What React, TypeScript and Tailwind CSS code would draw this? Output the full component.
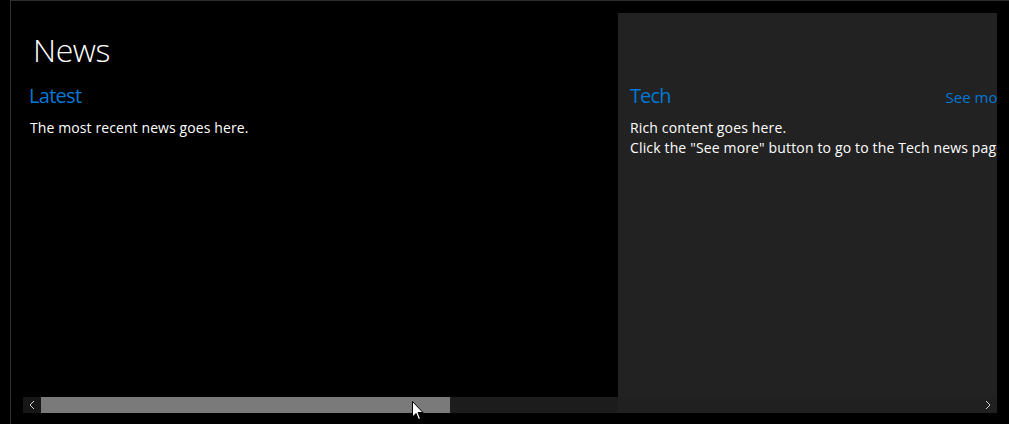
export default function App() {
  const font = { fontFamily: '"Open Sans", "Noto Sans", sans-serif' };
  return (
    <div className="w-[1009px] h-[424px] bg-black flex overflow-hidden" style={font}>
      <div className="w-[10px] shrink-0 bg-black" />
      <div className="flex-1 border-l border-t border-[#2e2e2e] pl-[12px] pt-[12px] relative">
        <div className="w-[974px] flex flex-col">
          <div className="h-[384px] flex overflow-hidden">
            {/* first hub section with page header */}
            <section className="w-[595px] shrink-0 pl-[6px]">
              <div className="h-[70px] pl-[4px] pt-[17px]">
                <h1 className="text-[32px] font-light text-white leading-[40px] tracking-[-0.4px]">News</h1>
              </div>
              <h2 className="text-[20px] text-[#0078d7] leading-[26px] tracking-[-0.7px]">Latest</h2>
              <p className="mt-[9px] pl-[1px] text-[14px] leading-[20px] text-white tracking-[0.1px]">The most recent news goes here.</p>
            </section>
            {/* tech section */}
            <section className="w-[379px] shrink-0 bg-[#222222] pl-[12px] overflow-hidden">
              <div className="h-[70px]" />
              <div className="flex items-baseline justify-between w-[400px]">
                <h2 className="text-[20px] text-[#0078d7] leading-[26px] tracking-[-0.9px]">Tech</h2>
                <span className="text-[15px] text-[#0078d7] pr-[18px]">See more</span>
              </div>
              <div className="mt-[9px] text-[14px] leading-[20px] text-white whitespace-nowrap tracking-[0.15px]">
                <p>Rich content goes here.</p>
                <p>Click the "See more" button to go to the Tech news page.</p>
              </div>
            </section>
          </div>
          {/* horizontal scrollbar */}
          <div className="h-[16px] flex">
            <div className="w-[18px] bg-[#171717] flex items-center justify-center">
              <svg width="6" height="10" viewBox="0 0 6 10">
                <path d="M5 1 L1 5 L5 9" fill="none" stroke="#d0d0d0" strokeWidth="1" />
              </svg>
            </div>
            <div className="w-[409px] bg-[#7a7a7a]" />
            <div className="w-[168px] bg-[#1c1c1c]" />
            <div className="flex-1 bg-[#202020] flex items-center justify-end pr-[6px]">
              <svg width="6" height="10" viewBox="0 0 6 10">
                <path d="M1 1 L5 5 L1 9" fill="none" stroke="#d0d0d0" strokeWidth="1" />
              </svg>
            </div>
          </div>
        </div>
        {/* mouse pointer */}
        <svg className="absolute left-[401px] top-[400px]" width="12" height="20" viewBox="0 0 12 20">
          <path d="M0.5 0.5 L0.5 16 L4 12.5 L6.5 18.5 L8.5 17.5 L6 11.5 L11 11.5 Z" fill="white" stroke="black" strokeWidth="1" />
        </svg>
      </div>
    </div>
  );
}
